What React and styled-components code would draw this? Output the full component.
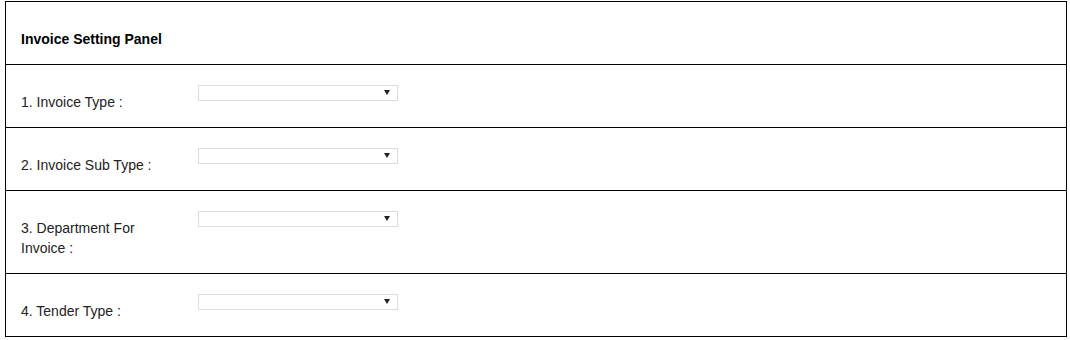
import React from 'react';
import styled, { createGlobalStyle } from 'styled-components';

const GlobalStyle = createGlobalStyle`
    body {
        margin: 0;
        background: #fff;
        font-family: Arial, "Liberation Sans", sans-serif;
        color: #000;
    }
`;

const Panel = styled.div`
    margin: 1px 0 0 5px;
    width: 1062px;
    box-sizing: border-box;
    border: 1px solid #000;
`;

const Header = styled.div`
    padding: 27px 15px 15px;
    font-size: 14px;
    font-weight: bold;
    line-height: 20px;
    border-bottom: 1px solid #000;
`;

const Row = styled.div`
    display: flex;
    align-items: flex-start;
    padding: 20px 15px 15px;
    border-bottom: ${props => (props.last ? 'none' : '1px solid #000')};
`;

const Label = styled.div`
    width: 147px;
    margin-right: 30px;
    padding-top: 7px;
    font-size: 14px;
    line-height: 20px;
    color: #222;
`;

const SelectWrap = styled.div`
    position: relative;
    width: 200px;
    height: 16px;
`;

const Select = styled.select`
    appearance: none;
    -webkit-appearance: none;
    display: block;
    width: 100%;
    height: 100%;
    box-sizing: border-box;
    border: 1px solid #dcdcdc;
    border-radius: 0;
    background: #fff;
    padding: 0 4px;
    margin: 0;
    font-size: 11px;
    outline: none;
`;

const Arrow = styled.svg`
    position: absolute;
    right: 8px;
    top: 5px;
    pointer-events: none;
`;

const fields = [
    'Invoice Type',
    'Invoice Sub Type',
    'Department For Invoice',
    'Tender Type',
];

function App() {
    return (
        <>
            <GlobalStyle />
            <Panel>
                <Header>Invoice Setting Panel</Header>
                {fields.map((f, i) => (
                    <Row key={f} last={i === fields.length - 1}>
                        <Label>{`${i + 1}. ${f} :`}</Label>
                        <SelectWrap>
                            <Select defaultValue="">
                                <option value=""></option>
                            </Select>
                            <Arrow width="6" height="5" viewBox="0 0 6 5">
                                <path d="M0 0 H6 L3 5 Z" fill="#222" />
                            </Arrow>
                        </SelectWrap>
                    </Row>
                ))}
            </Panel>
        </>
    );
}

export default App;
